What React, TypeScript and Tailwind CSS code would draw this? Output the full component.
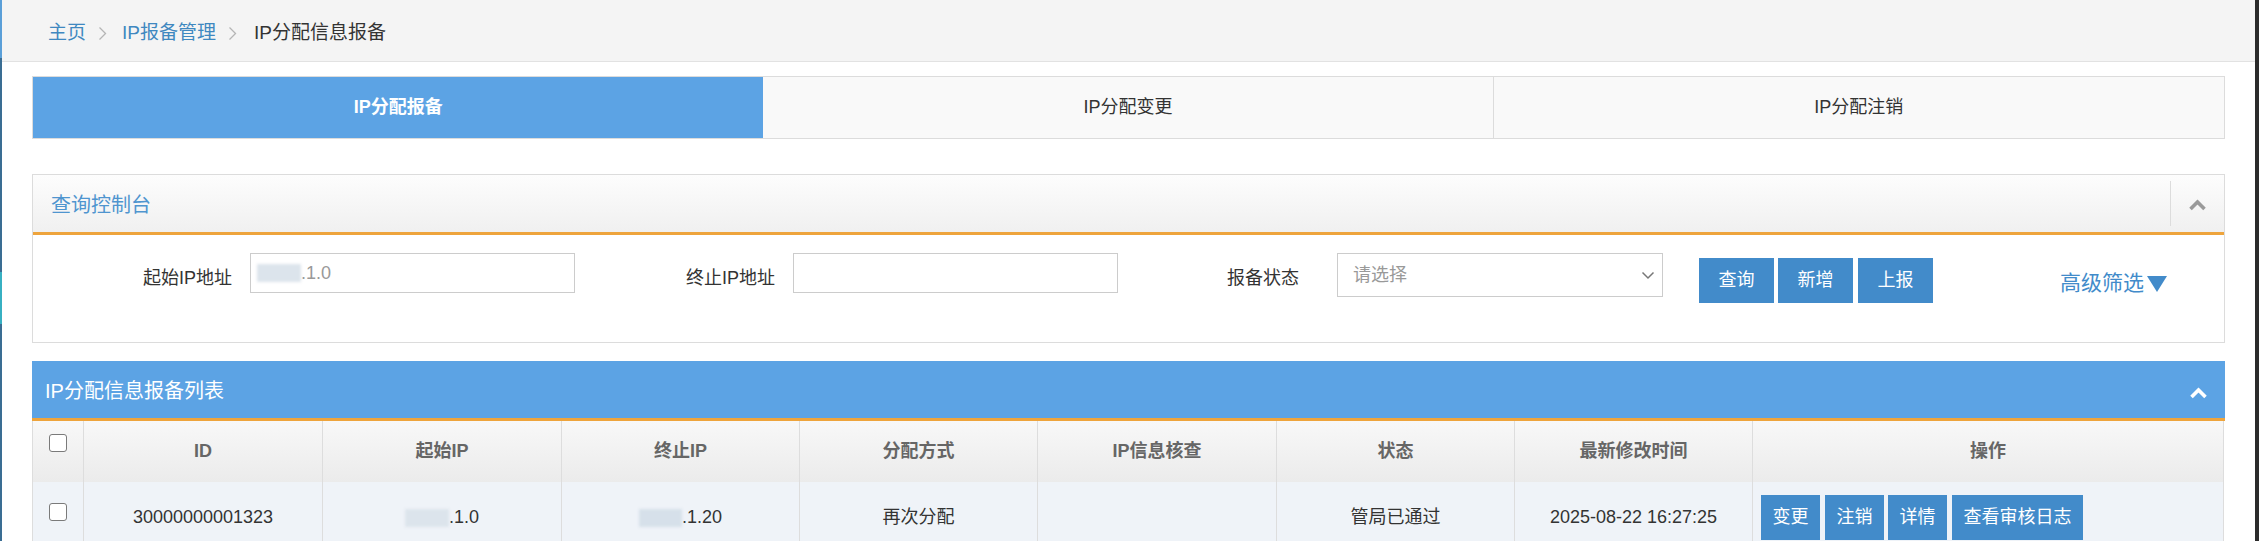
import React from "react";

function Crumb() {
  return (
    <svg width="9" height="15" viewBox="0 0 9 15" className="mx-[12px]">
      <polyline points="1.5,1.5 7.5,7.5 1.5,13.5" fill="none" stroke="#b5b5b5" strokeWidth="1.3" />
    </svg>
  );
}

function ChevronUp({ color }: { color: string }) {
  return (
    <svg width="19" height="12" viewBox="0 0 19 12">
      <polyline points="2.5,10 9.5,3 16.5,10" fill="none" stroke={color} strokeWidth="3.6" strokeLinejoin="miter" />
    </svg>
  );
}

function Blur({ w }: { w: number }) {
  return (
    <span className="inline-flex h-[20px] items-center">
      <span className={w === 44 ? "block h-[18px] w-[44px] bg-[#dce4ec] blur-[1.5px]" : "block h-[18px] w-[43px] bg-[#d6e0ea] blur-[1.5px]"} />
    </span>
  );
}

function Checkbox() {
  return <div className="h-[18px] w-[18px] rounded-[3px] border border-[#7a7a7a] bg-white" />;
}

export default function App() {
  const headers = ["ID", "起始IP", "终止IP", "分配方式", "IP信息核查", "状态", "最新修改时间", "操作"];
  return (
    <div className="flex h-[541px] w-[2259px] overflow-hidden bg-white [font-family:'Liberation_Sans','Noto_Sans_CJK_SC',sans-serif] text-[#333]">
      {/* left frame strip */}
      <div className="flex w-[2px] shrink-0 flex-col">
        <div className="h-[58px] bg-[#5a9fd8]" />
        <div className="h-[214px] bg-[#3a6d93]" />
        <div className="h-[52px] bg-[#37b0c2]" />
        <div className="flex-1 bg-[#3a6d93]" />
      </div>

      {/* main */}
      <div className="flex min-w-0 flex-1 flex-col">
        {/* breadcrumb */}
        <div className="flex h-[62px] shrink-0 items-center border-b border-[#e2e2e2] bg-[#f4f4f4] pl-[46px] pt-[5px] text-[19px]">
          <span className="text-[#3f88c0]">主页</span>
          <Crumb />
          <span className="pl-[3px] text-[#3f88c0]">IP报备管理</span>
          <Crumb />
          <span className="pl-[5px] text-[#333]">IP分配信息报备</span>
        </div>

        <div className="flex flex-col px-[30px]">
          {/* tabs */}
          <div className="mt-[14px] grid h-[63px] grid-cols-3 border border-[#dcdcdc] text-[18px]">
            <div className="flex items-center justify-center bg-[#5ca3e4] font-bold text-white">IP分配报备</div>
            <div className="flex items-center justify-center border-r border-[#dcdcdc] bg-[#f9f9f9] text-[#333]">IP分配变更</div>
            <div className="flex items-center justify-center bg-[#f9f9f9] text-[#333]">IP分配注销</div>
          </div>

          {/* query panel */}
          <div className="mt-[35px] border border-[#dcdcdc]">
            <div className="flex h-[60px] items-stretch border-b-[3px] border-[#eea43c] bg-gradient-to-b from-[#fdfdfd] to-[#f0f0f0]">
              <div className="flex flex-1 items-center pl-[18px] pt-[2px] text-[20px] text-[#4f95cf]">查询控制台</div>
              <div className="my-[6px] flex w-[54px] items-center justify-center border-l border-[#dcdcdc] pt-[2px]">
                <ChevronUp color="#9a9a9a" />
              </div>
            </div>
            <div className="flex h-[107px] items-start pt-[18px] text-[18px]">
              <div className="mt-[5px] h-[40px] w-[199px] text-right leading-[40px]">起始IP地址</div>
              <div className="ml-[18px] flex h-[40px] w-[325px] items-center border border-[#cccccc] pl-[6px] text-[#999]">
                <Blur w={44} />
                <span>.1.0</span>
              </div>
              <div className="mt-[5px] h-[40px] w-[200px] text-right leading-[40px]">终止IP地址</div>
              <div className="ml-[18px] h-[40px] w-[325px] border border-[#cccccc]" />
              <div className="mt-[5px] h-[40px] w-[181px] text-right leading-[40px]">报备状态</div>
              <div className="ml-[38px] flex h-[44px] w-[326px] items-center justify-between border border-[#cccccc] pl-[15px] pr-[7px] text-[#999]">
                <span>请选择</span>
                <svg width="14" height="9" viewBox="0 0 14 9">
                  <polyline points="1.5,1.5 7,7 12.5,1.5" fill="none" stroke="#777" strokeWidth="1.5" />
                </svg>
              </div>
              <div className="ml-[36px] mt-[5px] flex h-[45px] w-[75px] items-center justify-center bg-[#428bca] text-white">查询</div>
              <div className="ml-[4px] mt-[5px] flex h-[45px] w-[75px] items-center justify-center bg-[#428bca] text-white">新增</div>
              <div className="ml-[5px] mt-[5px] flex h-[45px] w-[75px] items-center justify-center bg-[#428bca] text-white">上报</div>
              <div className="ml-[127px] mt-[10px] flex h-[40px] items-center gap-[3px] text-[21px] text-[#428bca]">
                <span>高级筛选</span>
                <svg width="20" height="17" viewBox="0 0 20 17">
                  <polygon points="0,1 20,1 10,17" fill="#428bca" />
                </svg>
              </div>
            </div>
          </div>

          {/* list panel */}
          <div className="mt-[18px]">
            <div className="flex h-[60px] items-center justify-between border-b-[3px] border-[#eea43c] bg-[#5ca3e4] pl-[13px] pr-[17px] text-[20px] text-white">
              <span className="pt-[2px]">IP分配信息报备列表</span>
              <span className="pt-[6px]">
                <ChevronUp color="#ffffff" />
              </span>
            </div>
            <div className="grid grid-cols-[52px_239px_239px_238px_238px_239px_238px_238px_471px]">
              {/* header row */}
              <div className="flex h-[61px] justify-center border-x border-[#dddddd] bg-gradient-to-b from-[#f8f8f8] to-[#ebebeb] pt-[13px]">
                <Checkbox />
              </div>
              {headers.map((h) => (
                <div
                  key={h}
                  className="flex h-[61px] items-center justify-center border-r border-[#dddddd] bg-gradient-to-b from-[#f8f8f8] to-[#ebebeb] text-[18px] font-bold text-[#666]"
                >
                  {h}
                </div>
              ))}

              {/* data row */}
              <div className="flex h-[71px] justify-center border-x border-[#dddddd] bg-[#eff3f8] pt-[21px]">
                <Checkbox />
              </div>
              <div className="flex h-[71px] items-center justify-center border-r border-[#dddddd] bg-[#eff3f8] text-[18px]">30000000001323</div>
              <div className="flex h-[71px] items-center justify-center border-r border-[#dddddd] bg-[#eff3f8] text-[18px]">
                <Blur w={44} />
                <span>.1.0</span>
              </div>
              <div className="flex h-[71px] items-center justify-center border-r border-[#dddddd] bg-[#eff3f8] text-[18px]">
                <Blur w={43} />
                <span>.1.20</span>
              </div>
              <div className="flex h-[71px] items-center justify-center border-r border-[#dddddd] bg-[#eff3f8] text-[18px]">再次分配</div>
              <div className="flex h-[71px] items-center justify-center border-r border-[#dddddd] bg-[#eff3f8] text-[18px]" />
              <div className="flex h-[71px] items-center justify-center border-r border-[#dddddd] bg-[#eff3f8] text-[18px]">管局已通过</div>
              <div className="flex h-[71px] items-center justify-center border-r border-[#dddddd] bg-[#eff3f8] text-[18px]">2025-08-22 16:27:25</div>
              <div className="flex h-[71px] items-center border-r border-[#dddddd] bg-[#eff3f8] pl-[8px] text-[18px] text-white">
                <div className="flex h-[45px] w-[59px] items-center justify-center bg-[#428bca]">变更</div>
                <div className="ml-[5px] flex h-[45px] w-[59px] items-center justify-center bg-[#428bca]">注销</div>
                <div className="ml-[4px] flex h-[45px] w-[59px] items-center justify-center bg-[#428bca]">详情</div>
                <div className="ml-[5px] flex h-[45px] w-[131px] items-center justify-center bg-[#428bca]">查看审核日志</div>
              </div>
            </div>
          </div>
        </div>
      </div>

      {/* right dark strip */}
      <div className="w-[4px] shrink-0 bg-[#2b2b2b]" />
    </div>
  );
}
